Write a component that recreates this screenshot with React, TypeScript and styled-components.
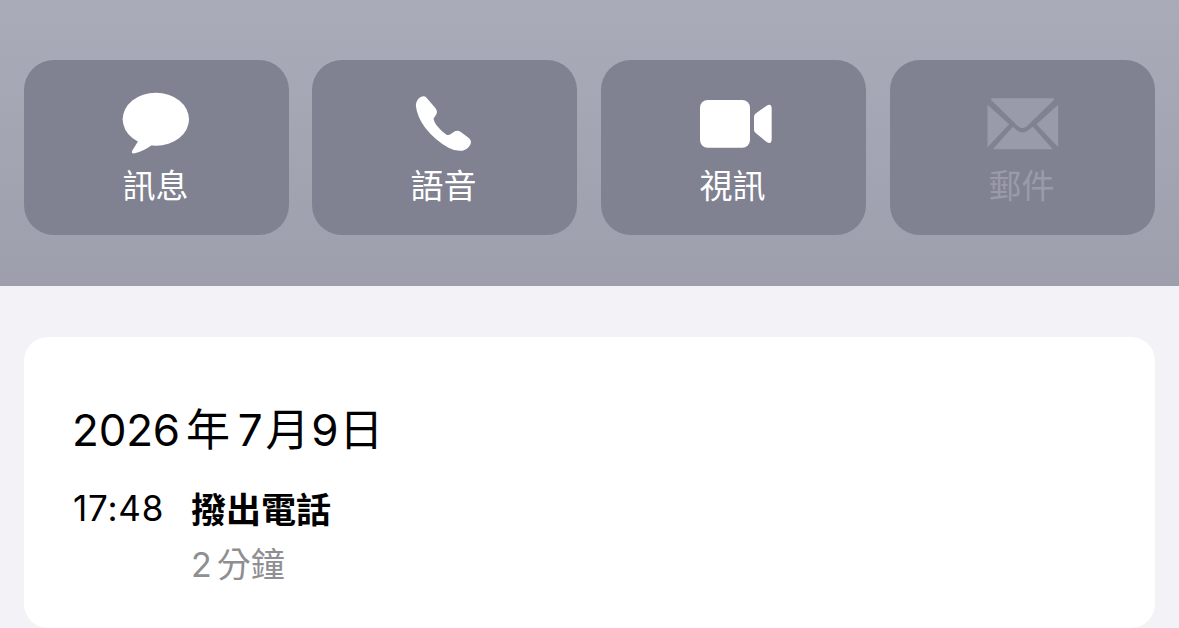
import React from "react";
import styled, { createGlobalStyle } from "styled-components";

const Global = createGlobalStyle`
  html, body { margin: 0; padding: 0; background: #f2f2f7; }
  body { font-family: Inter, "Noto Sans CJK TC", "Liberation Sans", sans-serif; overflow: hidden; }
`;

const Page = styled.div`
  width: 1179px;
  height: 628px;
  overflow: hidden;
  background: #f2f2f7;
`;

const Header = styled.header`
  height: 286px;
  box-sizing: border-box;
  padding: 60px 24px 0;
  background: linear-gradient(180deg, #a9abb8 0%, #9e9fad 100%);
  display: grid;
  grid-template-columns: 288px 289px 289px 265px;
  align-items: start;
`;

const ActionButton = styled.div`
  width: 265px;
  height: 175px;
  box-sizing: border-box;
  padding-top: 30px;
  border-radius: 30px;
  background: #808291;
  display: flex;
  flex-direction: column;
  align-items: center;
`;

const IconSvg = styled.svg<{ $muted?: boolean }>`
  display: block;
  width: 90px;
  height: 66px;
  fill: ${(p) => (p.$muted ? "#9a9baa" : "#ffffff")};
`;

const ActionLabel = styled.span<{ $muted?: boolean }>`
  margin-top: 8px;
  padding-right: 2px;
  font-family: "Noto Sans CJK TC", sans-serif;
  font-size: 33px;
  line-height: 40px;
  font-weight: 400;
  color: ${(p) => (p.$muted ? "#9a9baa" : "#ffffff")};
`;

const Card = styled.section`
  margin: 51px 24px 0;
  height: 291px;
  box-sizing: border-box;
  padding: 64px 48px 0;
  border-radius: 24px;
  background: #ffffff;
`;

const DateTitle = styled.h2`
  margin: 0;
  display: flex;
  font-size: 44px;
  line-height: 58px;
  font-weight: 400;
  color: #000;
  font-family: Inter, "Noto Sans CJK TC", sans-serif;
  letter-spacing: -0.2px;
`;

const DatePart = styled.span<{ $gap?: number }>`
  margin-right: ${(p) => p.$gap ?? 0}px;
`;

const CallRow = styled.div`
  margin-top: 25px;
  display: grid;
  grid-template-columns: 119px 1fr;
  row-gap: 9px;
  font-size: 35px;
  line-height: 48px;
`;

const CallTime = styled.span`
  padding-left: 1px;
  font-family: Inter, sans-serif;
  color: #000;
  font-size: 35px;
  letter-spacing: 0.8px;
`;

const CallType = styled.span`
  font-family: "Noto Sans CJK TC", sans-serif;
  font-weight: 700;
  color: #000;
`;

const CallDuration = styled.span`
  grid-column: 2;
  display: flex;
  gap: 5px;
  font-size: 34px;
  font-family: Inter, "Noto Sans CJK TC", sans-serif;
  color: #8e8e93;
`;

const BubbleIcon = () => (
  <IconSvg viewBox="0 0 270 198">
    <g transform="translate(-37.5 -30)">
      <ellipse cx="169" cy="118" rx="99.5" ry="79.5" />
      <path d="M118 180 L98 212 Q94 222 106 220 Q132 214 156 196 Z" />
    </g>
  </IconSvg>
);

const PhoneIcon = () => (
  <IconSvg viewBox="0 0 270 198">
    <g transform="translate(1.5 -15)">
      <path d="M46 62 Q47 42 62 35 Q72 31 78 38 L104 68 Q112 78 108 87 L99 101 Q100 108 108 121 Q122 139 138 149 Q145 152 151 147 L163 139 Q172 135 181 141 L206 160 Q214 168 210 178 Q202 194 186 197 Q166 200 144 188 Q104 166 74 128 Q50 96 46 62 Z" />
    </g>
  </IconSvg>
);

const VideoIcon = () => (
  <IconSvg viewBox="0 0 270 198">
    <g transform="translate(3 0)">
      <rect x="30" y="30" width="150" height="143" rx="23" />
      <path d="M192 80 Q192 74 198 70 L230 47 Q245 39 245 56 V146 Q245 165 230 156 L198 130 Q192 126 192 120 Z" />
    </g>
  </IconSvg>
);

const MailIcon = () => (
  <IconSvg viewBox="0 0 270 198" $muted>
    <g transform="translate(-7.5 0)">
      <path d="M50 25 H233 Q238 25 234 31 L154 109 Q141 120 128 109 L48 31 Q45 25 50 25 Z" />
      <path d="M36 44 L101 103 L36 172 Z" />
      <path d="M248 44 L183 103 L248 172 Z" />
      <path d="M52 178 L112 110 L124 121 Q141 134 158 121 L172 110 L232 178 Z" />
    </g>
  </IconSvg>
);

export default function App() {
  return (
    <Page>
      <Global />
      <Header>
        <ActionButton>
          <BubbleIcon />
          <ActionLabel>訊息</ActionLabel>
        </ActionButton>
        <ActionButton>
          <PhoneIcon />
          <ActionLabel>語音</ActionLabel>
        </ActionButton>
        <ActionButton>
          <VideoIcon />
          <ActionLabel>視訊</ActionLabel>
        </ActionButton>
        <ActionButton>
          <MailIcon />
          <ActionLabel $muted>郵件</ActionLabel>
        </ActionButton>
      </Header>
      <Card>
        <DateTitle>
          <DatePart $gap={6}>2026</DatePart>
          <DatePart $gap={8}>年</DatePart>
          <DatePart $gap={3}>7</DatePart>
          <DatePart $gap={2}>月</DatePart>
          <DatePart $gap={1}>9</DatePart>
          <DatePart>日</DatePart>
        </DateTitle>
        <CallRow>
          <CallTime>17:48</CallTime>
          <CallType>撥出電話</CallType>
          <CallDuration>
            <span>2</span>
            <span>分鐘</span>
          </CallDuration>
        </CallRow>
      </Card>
    </Page>
  );
}
